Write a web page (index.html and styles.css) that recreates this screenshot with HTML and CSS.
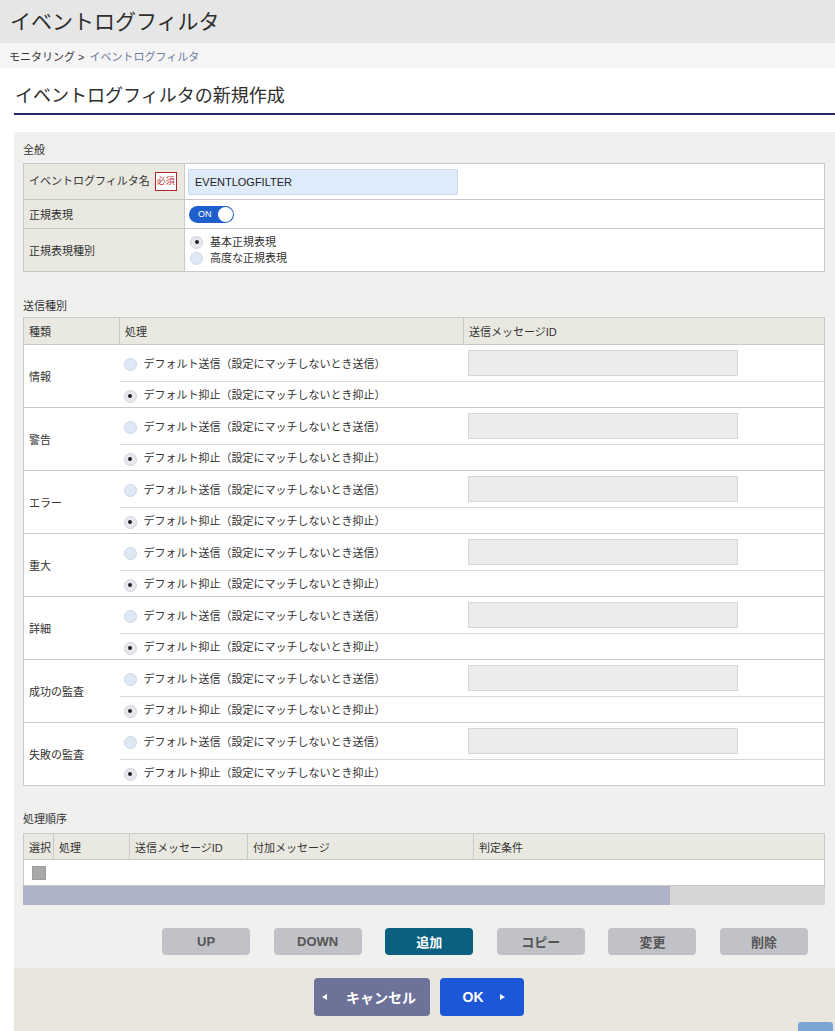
FILE: index.html
```html
<!DOCTYPE html>
<html lang="ja">
<head>
<meta charset="utf-8">
<title>イベントログフィルタ</title>
<link rel="stylesheet" href="styles.css">
</head>
<body>
<header class="app-header"><h1 class="app-title">イベントログフィルタ</h1></header>
<nav class="breadcrumb"><span>モニタリング &gt;</span><span class="current">イベントログフィルタ</span></nav>
<h2 class="page-heading">イベントログフィルタの新規作成</h2>

<main class="panel">
  <div class="section-label">全般</div>
  <table class="general">
    <colgroup><col class="g1"><col></colgroup>
    <tr class="r1"><th>イベントログフィルタ名 <span class="req">必須</span></th><td><div class="text-input">EVENTLOGFILTER</div></td></tr>
    <tr class="r2"><th>正規表現</th><td><span class="toggle">ON</span></td></tr>
    <tr class="r3"><th>正規表現種別</th><td><div class="opt"><span class="radio on"></span>基本正規表現</div><div class="opt"><span class="radio"></span>高度な正規表現</div></td></tr>
  </table>

  <div class="section-label s2">送信種別</div>
  <table class="send">
    <colgroup><col class="c1"><col class="c2"><col class="c3"></colgroup>
    <tr class="head"><th>種類</th><th>処理</th><th>送信メッセージID</th></tr>
    <tr class="sa"><td class="kind" rowspan="2">情報</td><td class="proc"><span class="radio"></span>デフォルト送信（設定にマッチしないとき送信）</td><td class="mid"><div class="id-input"></div></td></tr>
    <tr class="sb"><td class="proc"><span class="radio on"></span>デフォルト抑止（設定にマッチしないとき抑止）</td><td class="mid"></td></tr>
    <tr class="sa"><td class="kind" rowspan="2">警告</td><td class="proc"><span class="radio"></span>デフォルト送信（設定にマッチしないとき送信）</td><td class="mid"><div class="id-input"></div></td></tr>
    <tr class="sb"><td class="proc"><span class="radio on"></span>デフォルト抑止（設定にマッチしないとき抑止）</td><td class="mid"></td></tr>
    <tr class="sa"><td class="kind" rowspan="2">エラー</td><td class="proc"><span class="radio"></span>デフォルト送信（設定にマッチしないとき送信）</td><td class="mid"><div class="id-input"></div></td></tr>
    <tr class="sb"><td class="proc"><span class="radio on"></span>デフォルト抑止（設定にマッチしないとき抑止）</td><td class="mid"></td></tr>
    <tr class="sa"><td class="kind" rowspan="2">重大</td><td class="proc"><span class="radio"></span>デフォルト送信（設定にマッチしないとき送信）</td><td class="mid"><div class="id-input"></div></td></tr>
    <tr class="sb"><td class="proc"><span class="radio on"></span>デフォルト抑止（設定にマッチしないとき抑止）</td><td class="mid"></td></tr>
    <tr class="sa"><td class="kind" rowspan="2">詳細</td><td class="proc"><span class="radio"></span>デフォルト送信（設定にマッチしないとき送信）</td><td class="mid"><div class="id-input"></div></td></tr>
    <tr class="sb"><td class="proc"><span class="radio on"></span>デフォルト抑止（設定にマッチしないとき抑止）</td><td class="mid"></td></tr>
    <tr class="sa"><td class="kind" rowspan="2">成功の監査</td><td class="proc"><span class="radio"></span>デフォルト送信（設定にマッチしないとき送信）</td><td class="mid"><div class="id-input"></div></td></tr>
    <tr class="sb"><td class="proc"><span class="radio on"></span>デフォルト抑止（設定にマッチしないとき抑止）</td><td class="mid"></td></tr>
    <tr class="sa"><td class="kind" rowspan="2">失敗の監査</td><td class="proc"><span class="radio"></span>デフォルト送信（設定にマッチしないとき送信）</td><td class="mid"><div class="id-input"></div></td></tr>
    <tr class="sb"><td class="proc"><span class="radio on"></span>デフォルト抑止（設定にマッチしないとき抑止）</td><td class="mid"></td></tr>
  </table>

  <div class="section-label s3">処理順序</div>
  <table class="order">
    <colgroup><col class="o1"><col class="o2"><col class="o3"><col class="o4"><col class="o5"></colgroup>
    <tr class="head"><th>選択</th><th>処理</th><th>送信メッセージID</th><th>付加メッセージ</th><th>判定条件</th></tr>
    <tr class="body"><td colspan="5"><span class="check"></span></td></tr>
  </table>
  <div class="hscroll"><div class="thumb"></div></div>

  <div class="actions">
    <button class="btn">UP</button>
    <button class="btn">DOWN</button>
    <button class="btn primary">追加</button>
    <button class="btn">コピー</button>
    <button class="btn">変更</button>
    <button class="btn">削除</button>
  </div>
</main>

<footer class="footer">
  <button class="fbtn cancel">キャンセル</button>
  <button class="fbtn ok">OK</button>
</footer>
<div class="page-top"></div>
</body>
</html>
```

FILE: styles.css
```css
* { box-sizing: border-box; }
html { overflow: hidden; }
body {
  margin: 0;
  font-family: "Liberation Sans", "Noto Sans CJK JP", sans-serif;
  font-size: 11px;
  color: #333;
  background: #fff;
}

.app-header {
  height: 43px;
  background: #e6e6e6;
  padding-left: 10px;
  display: flex;
  align-items: center;
}
.app-title {
  margin: 0;
  font-size: 21px;
  font-weight: normal;
  color: #2e2e2e;
  line-height: 1;
}

.breadcrumb {
  height: 25px;
  background: #f5f5f5;
  padding-left: 9px;
  display: flex;
  align-items: center;
  font-size: 11px;
  color: #333;
}
.breadcrumb .current {
  color: #6c7b9c;
  margin-left: 5px;
}

.page-heading {
  margin: 16px 0 0 14px;
  padding: 0 0 5px 1px;
  border-bottom: 2px solid #1e2c66;
  font-size: 18px;
  line-height: 24px;
  font-weight: normal;
  color: #2e2e2e;
}

.panel {
  margin: 17px 0 0 14px;
  background: #f0f0ee;
  padding: 10px 10px 13px 9px;
}
.section-label {
  line-height: 16px;
  margin-bottom: 5px;
  font-size: 11px;
  color: #333;
}
.section-label.s2 { margin-top: 26px; margin-bottom: 3px; }
.section-label.s3 { margin-top: 25px; margin-bottom: 6px; }

table {
  border-collapse: collapse;
  table-layout: fixed;
  width: 100%;
  font-size: 11px;
  color: #333;
  border: 1px solid #c9c9c9;
}

/* general */
.general .g1 { width: 161px; }
.general th {
  background: #e9e9e1;
  border: 1px solid #c9c9c9;
  text-align: left;
  font-weight: normal;
  padding: 0 5px;
  white-space: nowrap;
}
.general td {
  background: #fff;
  border: 1px solid #c9c9c9;
  padding: 0 3px;
}
.general .r1 { height: 36px; }
.general .r2 { height: 29px; }
.general .r3 { height: 43px; }
.req {
  display: inline-block;
  border: 1px solid #b3262b;
  color: #c0393e;
  background: #fff;
  font-size: 9px;
  line-height: 17px;
  padding: 0 1px;
  margin-left: 2px;
  vertical-align: middle;
}
.text-input {
  width: 270px;
  height: 26px;
  background: #deebfa;
  border: 1px solid #c8d7ea;
  border-radius: 2px;
  padding-left: 6px;
  line-height: 24px;
  font-size: 11px;
  color: #222;
}
.toggle {
  position: relative;
  display: inline-flex;
  align-items: center;
  width: 45px;
  height: 17px;
  border-radius: 9px;
  background: #1f5fcc;
  color: #fff;
  font-size: 9px;
  padding-left: 9px;
  margin-left: 1px;
  vertical-align: middle;
}
.toggle::after {
  content: "";
  position: absolute;
  right: 1px;
  top: 1px;
  width: 15px;
  height: 15px;
  border-radius: 50%;
  background: #fff;
}
.opt {
  line-height: 16px;
  display: flex;
  align-items: center;
  padding-left: 2px;
}

.radio {
  position: relative;
  display: inline-block;
  width: 13px;
  height: 13px;
  border-radius: 50%;
  background: #dfe9f5;
  border: 1px solid #cbd7e6;
  margin-right: 7px;
  vertical-align: middle;
  flex: none;
}
.radio.on {
  background: #e7e8ed;
  border-color: #d0d3db;
}
.radio.on::after {
  content: "";
  position: absolute;
  left: 3.5px;
  top: 3.5px;
  width: 4px;
  height: 4px;
  border-radius: 50%;
  background: #222;
}

/* send table */
.send .c1 { width: 96px; }
.send .c2 { width: 344px; }
.send .head { height: 27px; }
.send th, .order th {
  background: #e9e9e1;
  border: 1px solid #c9c9c9;
  text-align: left;
  font-weight: normal;
  padding: 0 5px;
  white-space: nowrap;
}
.send td {
  background: #fff;
  padding: 0;
}
.send .sa td { border-top: 1px solid #c9c9c9; }
.send .sb td { border-top: 1px solid #d9d9d9; }
.send .sa { height: 37px; }
.send .sb { height: 26px; }
.send .kind { padding-left: 5px; }
.send .proc { padding-left: 4px; white-space: nowrap; }
.send .mid { padding-left: 4px; }
.id-input {
  width: 270px;
  height: 26px;
  background: #ececec;
  border: 1px solid #d6d6d6;
}

/* order table */
.order .o1 { width: 30px; }
.order .o2 { width: 76px; }
.order .o3 { width: 118px; }
.order .o4 { width: 226px; }
.order .head { height: 26px; }
.order .body { height: 26px; }
.order .body td {
  background: #fff;
  padding: 0 0 0 8px;
  border-top: 1px solid #c9c9c9;
}
.check {
  display: block;
  width: 14px;
  height: 14px;
  background: #a9a9a9;
  border: 1px solid #9d9d9d;
}
.hscroll {
  height: 19px;
  background: #d6d6d6;
}
.hscroll .thumb {
  width: 647px;
  height: 100%;
  background: #aeb3c8;
}

/* actions */
.actions {
  display: flex;
  justify-content: flex-end;
  gap: 23.6px;
  padding-right: 17px;
  margin-top: 23px;
}
.btn {
  width: 88px;
  height: 27px;
  border: 0;
  border-radius: 4px;
  background: #c1c2c7;
  color: #555;
  font-family: "Liberation Sans", "Noto Sans CJK JP", sans-serif;
  font-size: 13px;
  font-weight: bold;
  padding: 0;
}
.btn.primary {
  background: #0b5f7f;
  color: #fff;
}

/* footer */
.footer {
  margin-left: 14px;
  height: 80px;
  background: #e9e5df;
  display: flex;
  justify-content: center;
  align-items: flex-start;
  gap: 10px;
  padding: 10px 11px 0 0;
}
.fbtn {
  position: relative;
  height: 38px;
  border: 0;
  border-radius: 4px;
  color: #fff;
  font-family: "Liberation Sans", "Noto Sans CJK JP", sans-serif;
  font-size: 14px;
  font-weight: bold;
  padding: 0;
}
.fbtn.cancel {
  width: 116px;
  background: #6d7299;
  padding-left: 18px;
}
.fbtn.cancel::before {
  content: "";
  position: absolute;
  left: 8px;
  top: 16px;
  border-style: solid;
  border-width: 3.5px 5px 3.5px 0;
  border-color: transparent #fff transparent transparent;
}
.fbtn.ok {
  width: 84px;
  background: #1b57d6;
  padding-right: 18px;
}
.fbtn.ok::after {
  content: "";
  position: absolute;
  left: 60px;
  top: 16px;
  border-style: solid;
  border-width: 3.5px 0 3.5px 5px;
  border-color: transparent transparent transparent #fff;
}

.page-top {
  position: fixed;
  right: 2px;
  bottom: -16px;
  width: 35px;
  height: 25px;
  border-radius: 3px;
  background: #7ca6d2;
}
```
